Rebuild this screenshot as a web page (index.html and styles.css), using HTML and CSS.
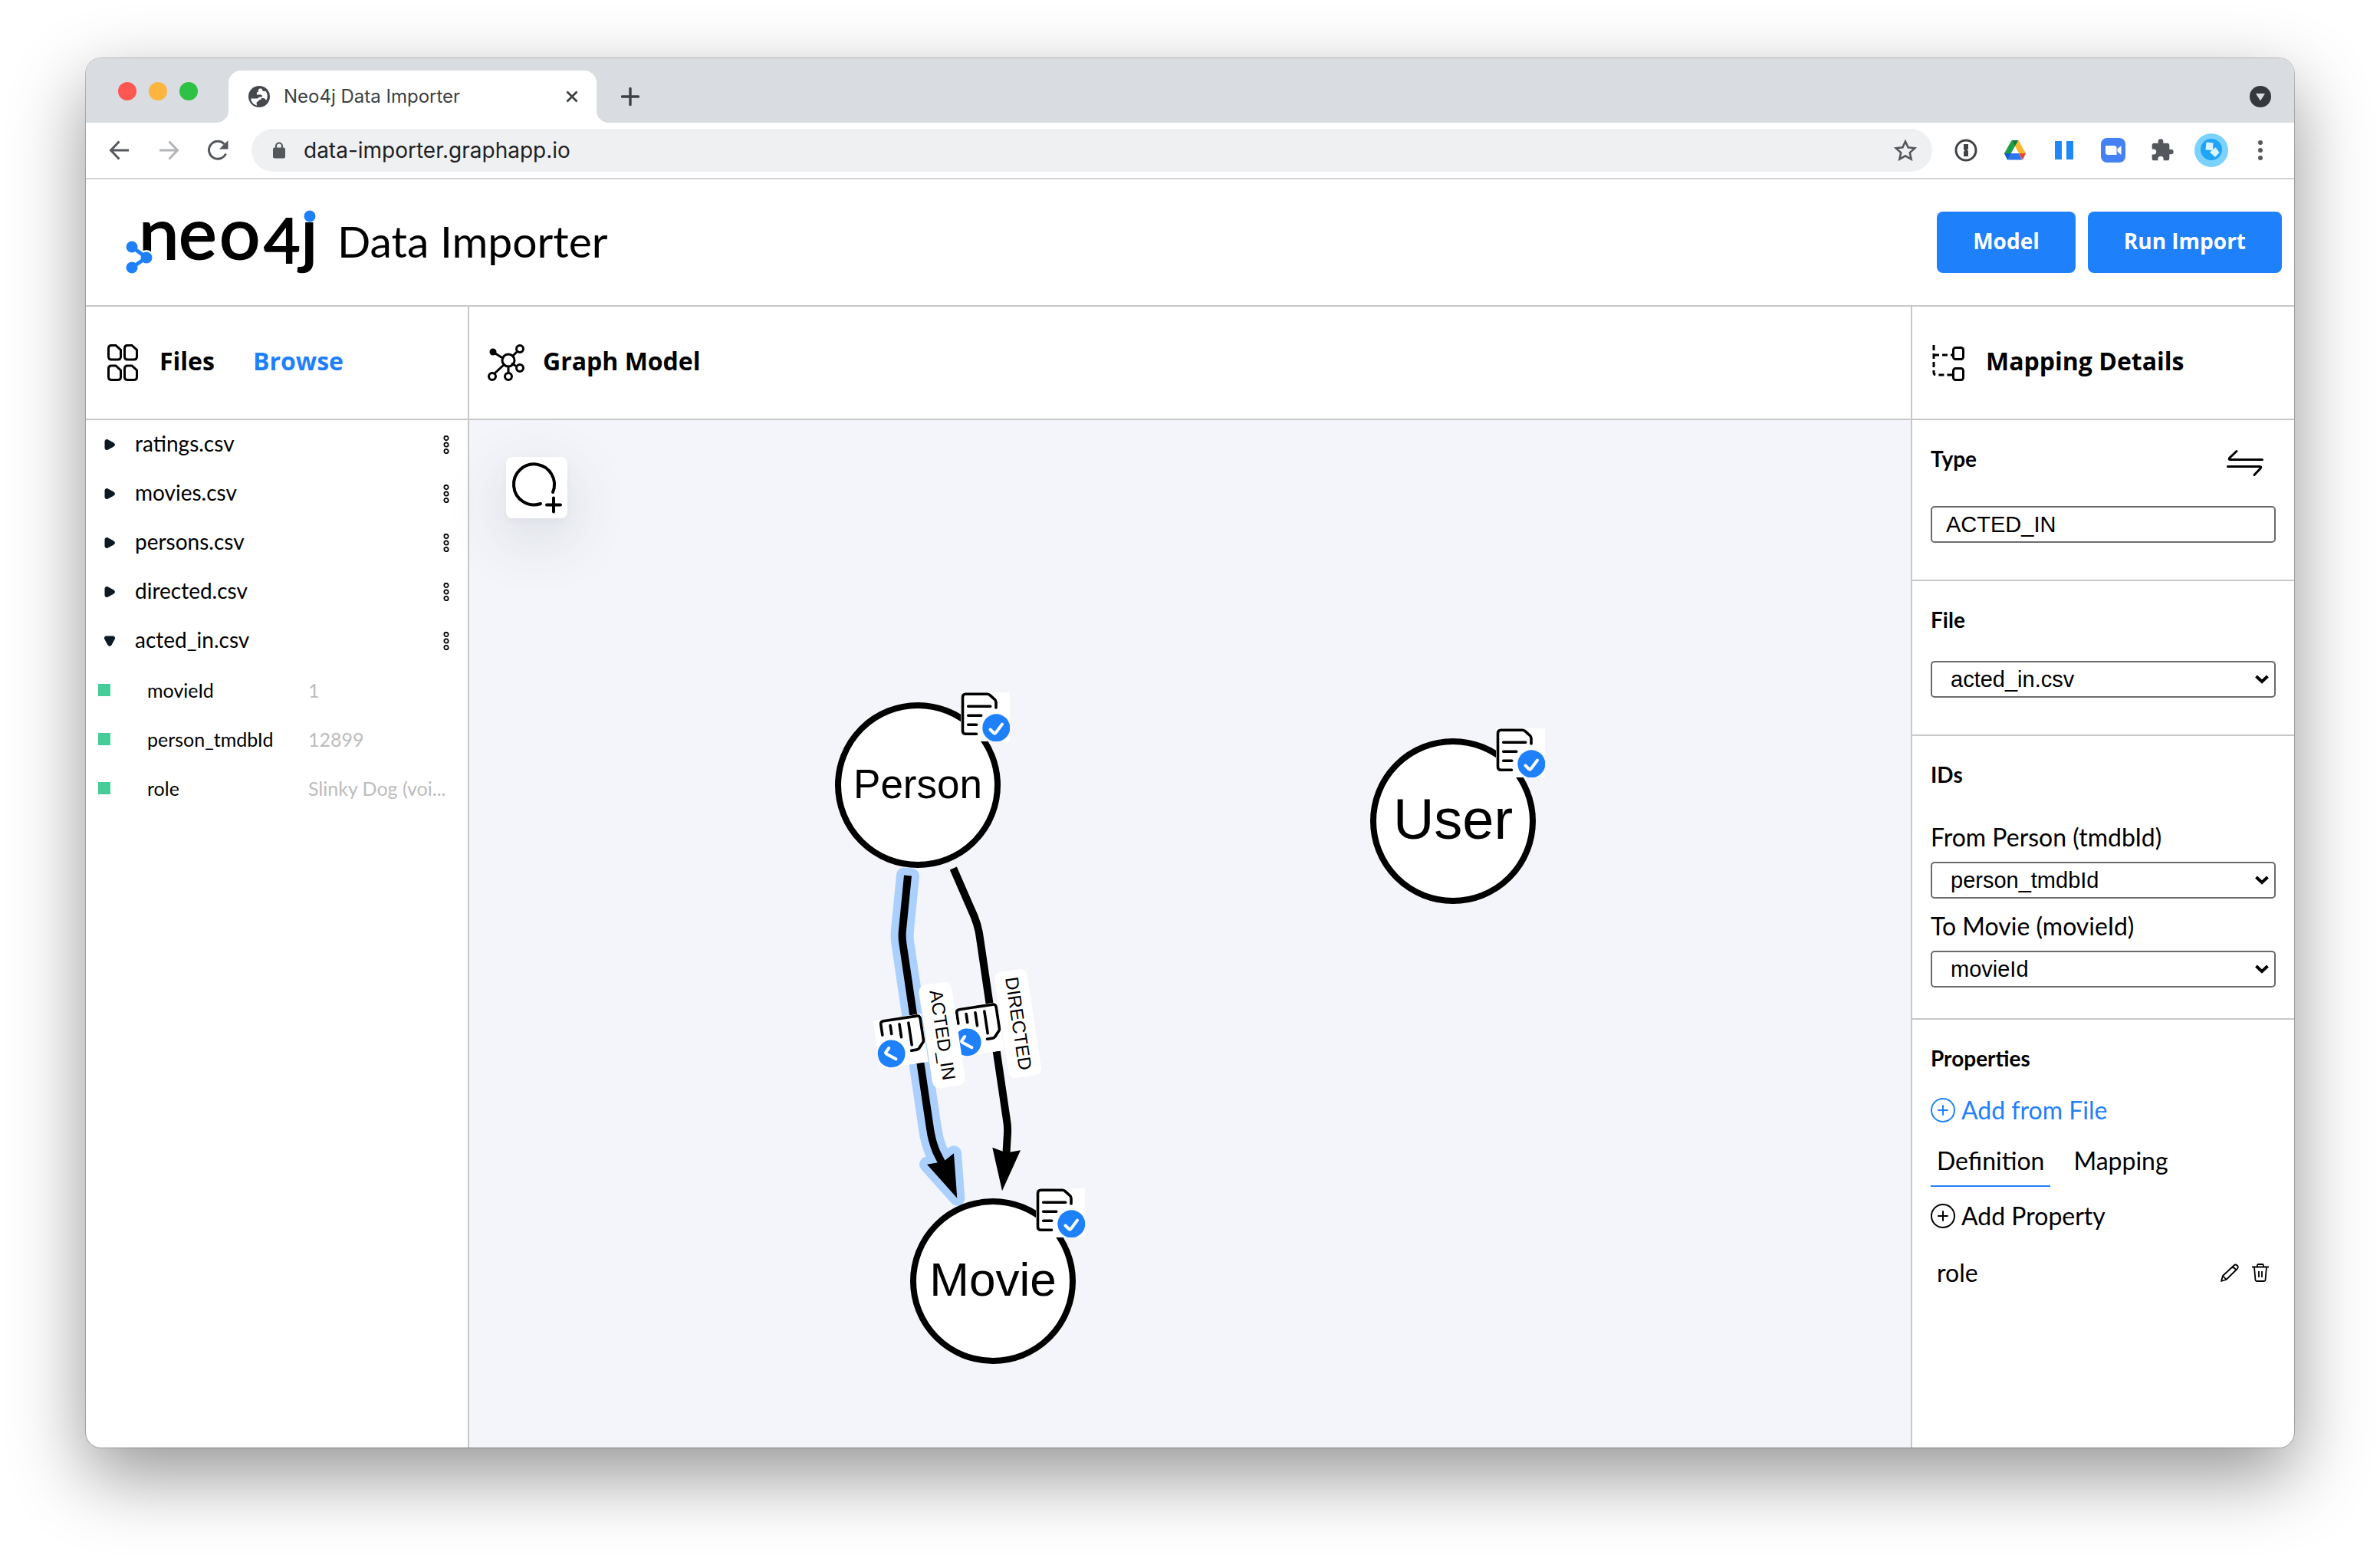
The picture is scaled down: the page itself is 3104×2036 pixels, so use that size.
FILE: index.html
```html
<!DOCTYPE html>
<html lang="en">
<head>
<meta charset="utf-8">
<title>Neo4j Data Importer</title>
<link rel="stylesheet" href="styles.css">
</head>
<body>
<svg class="defs" aria-hidden="true">
  <symbol id="kebab" viewBox="0 0 8 24"><g fill="none" stroke="#000" stroke-width="1.700"><circle cx="4" cy="3.500" r="2.700"/><circle cx="4" cy="12" r="2.700"/><circle cx="4" cy="20.500" r="2.700"/></g></symbol>
  <symbol id="caret" viewBox="0 0 14 14"><path d="M1 2.500v9q0 2 2 2h1l8.500-4.500q2-2 0-4L4 .5H3q-2 0-2 2z" fill="#0c1a25" stroke="#0c1a25"/></symbol>
  <symbol id="plus-circle" viewBox="0 0 32 32"><g fill="none" stroke="currentColor" stroke-width="2" stroke-linecap="round"><circle cx="16" cy="16" r="15"/><path d="M16 10v12M10 16h12"/></g></symbol>
  <symbol id="mapped" viewBox="0 0 64 64">
    <path d="M0 0h64v64H0z" fill="#fff"/>
    <path d="M20.500 54.300H6.500Q2.500 54.300 2.500 50.300V6.300Q2.500 2.300 6.500 2.300H34.500Q36.500 2.300 38 3.600L44.500 9.500Q46 11 46 13V20M9.700 18.300h29M9.700 30.300h17M9.700 42.300h11" fill="none" stroke="#000" stroke-width="3.600" stroke-linecap="round"/>
    <circle cx="46.300" cy="46.300" r="18" fill="#1f80fb"/>
    <path d="M38.500 48.500l4.500 4.500q1.500 1.200 2.800-.4l8.200-11" fill="none" stroke="#fff" stroke-width="4" stroke-linecap="round"/>
  </symbol>
</svg>

<div class="window">
  <div class="tabstrip">
    <div class="lights"><i class="light red"></i><i class="light amber"></i><i class="light green"></i></div>
    <div class="tab">
      <svg width="28" height="28" viewBox="0 0 28 28"><circle cx="14" cy="14" r="14" fill="#45494e"/><path d="M16 3.500c-3 0-3.500 2-3 4-2 .5-2.500 2-2 4h5c1.500 0 2 1 2 3h-3c-2 0-2 2-3.500 2H3.200c.4 4.500 3.500 8 7.800 9 0-2-1-3 0-4.500 1-1 3-1 3-3 1.500 0 3 0 3-2h2.500c2 0 2.500 2 4 2.500 2-4 1.500-9-1.500-12-1 1-3.500.5-4-1s-.5-2-2-2z" fill="#fff"/></svg>
      <span class="tab-title">Neo4j Data Importer</span>
      <button class="bare" aria-label="Close tab"><svg width="16" height="16" viewBox="0 0 16 16"><path d="M1.500 1.500l13 13M14.500 1.500l-13 13" stroke="#3c4043" stroke-width="2.800"/></svg></button>
    </div>
    <button class="bare new-tab" aria-label="New tab"><svg width="24" height="24" viewBox="0 0 24 24"><path d="M12 1.500v21M1.500 12h21" stroke="#3c4043" stroke-width="3.400" stroke-linecap="round"/></svg></button>
    <button class="bare tab-search" aria-label="Search tabs"><svg width="28" height="28" viewBox="0 0 28 28"><circle cx="14" cy="14" r="14" fill="#35393d"/><path d="M8 10h12l-6 9.500z" fill="#dadce0"/></svg></button>
  </div>

  <div class="toolbar">
    <div class="nav">
      <button class="bare" aria-label="Back"><svg width="28" height="28" viewBox="0 0 28 28"><path d="M26 14H3M13.500 2.500L2.500 14l11 11.500" fill="none" stroke="#54575c" stroke-width="3"/></svg></button>
      <button class="bare" aria-label="Forward"><svg width="28" height="28" viewBox="0 0 28 28"><path d="M2 14h23M14.500 2.500l11 11.500-11 11.500" fill="none" stroke="#b3b5b8" stroke-width="3"/></svg></button>
      <button class="bare" aria-label="Reload"><svg width="28" height="28" viewBox="0 0 28 28"><path d="M24.500 18.500A11.500 11.500 0 1 1 22.500 6" fill="none" stroke="#54575c" stroke-width="3"/><path d="M27.500 1v11.500H16z" fill="#54575c"/></svg></button>
    </div>
    <div class="omnibox">
      <svg width="16" height="22" viewBox="0 0 16 22"><rect y="7.500" width="16" height="14" rx="2" fill="#54575c"/><path d="M4 9V5.500a4 4 0 0 1 8 0V9" fill="none" stroke="#54575c" stroke-width="2.200"/></svg>
      <input class="url" type="text" aria-label="Address" value="data-importer.graphapp.io">
      <button class="bare" aria-label="Bookmark"><svg width="30" height="28" viewBox="0 0 30 28"><path d="M15 2.500l3.600 7.900 8.600.9-6.400 5.800 1.800 8.500L15 21.300l-7.600 4.300 1.800-8.500-6.400-5.800 8.600-.9z" fill="none" stroke="#54575c" stroke-width="2.600"/></svg></button>
    </div>
    <div class="extensions">
      <button class="bare" aria-label="Password manager"><svg width="30" height="30" viewBox="0 0 30 30"><circle cx="15" cy="15" r="13" fill="#fff" stroke="#404346" stroke-width="3"/><path d="M12 7h6v6l-1.500 1.500L18 16v7h-6v-6l1.500-1.500L12 14z" fill="#404346"/></svg></button>
      <button class="bare" aria-label="Drive"><svg width="30" height="28" viewBox="0 0 30 28"><path d="M10.500 1L1 18l4 8.500L15 9z" fill="#1c9f47"/><path d="M10.500 1h9L15 9z" fill="#0b7a33"/><path d="M19.500 1L29 18h-9L15 9z" fill="#fdb52c"/><path d="M10 18h10l4.500 8.500H5.500z" fill="#2b76f0"/><path d="M1 18h9l-4.500 8.500z" fill="#1b5bd0"/><path d="M20 18h9l-4 8.500z" fill="#ea4130"/><path d="M15 9l5 9H10z" fill="#fff"/></svg></button>
      <button class="bare" aria-label="Boards"><svg width="24" height="24" viewBox="0 0 24 24"><path d="M0 0h9v24H0zM15 0h9v24h-9z" fill="#1f87f8"/></svg></button>
      <button class="bare" aria-label="Meetings"><svg width="32" height="32" viewBox="0 0 32 32"><rect width="32" height="32" rx="8" fill="#4480f6"/><path d="M6 10h11q3.500 0 3.500 3v9H9.500Q6 22 6 19zM21.500 14l5-4v12l-5-4z" fill="#fff"/></svg></button>
      <button class="bare" aria-label="Extensions"><svg width="32" height="32" viewBox="0 0 24 24"><path d="M20.500 11H19V7c0-1.100-.9-2-2-2h-4V3.500a2.500 2.500 0 0 0-5 0V5H4c-1.100 0-2 .9-2 2v3.800h1.500a2.700 2.700 0 0 1 0 5.400H2V20c0 1.100.9 2 2 2h3.800v-1.500a2.700 2.700 0 0 1 5.400 0V22H17c1.100 0 2-.9 2-2v-4h1.500a2.500 2.500 0 0 0 0-5z" fill="#54575c"/></svg></button>
      <button class="bare" aria-label="Profile"><svg width="44" height="44" viewBox="0 0 44 44"><circle cx="22" cy="22" r="22" fill="#7bd2fc"/><circle cx="22" cy="21" r="14" fill="#1fa4f8"/><path d="M15.500 11.500l9 1-.5 9.500-9.500-.5zM27.500 18l5 7-5.500 6-7-6.500z" fill="#d9f5ff"/></svg></button>
      <button class="bare" aria-label="Browser menu"><svg width="8" height="28" viewBox="0 0 8 28"><g fill="#54575c"><circle cx="4" cy="4" r="3"/><circle cx="4" cy="14" r="3"/><circle cx="4" cy="24" r="3"/></g></svg></button>
    </div>
  </div>

  <header class="app-header">
    <svg class="logo" width="248" height="88" viewBox="0 0 248 88" role="img" aria-label="neo4j">
      <g class="logo-text">
        <text x="17 69 122" y="66">neo</text><text class="logo-four" x="180" y="71">4</text><text x="228" y="66">j</text>
      </g>
      <circle cx="240" cy="2" r="13" fill="#fff"/><circle cx="240" cy="10" r="7.500" fill="#1f80fb"/>
      <circle cx="27" cy="64" r="10" fill="#fff"/>
      <g fill="#1f80fb"><path d="M8 50l19 14L8 77" fill="none" stroke="#1f80fb" stroke-width="5"/><circle cx="8" cy="50" r="7.500"/><circle cx="27" cy="64" r="7.500"/><circle cx="8" cy="77" r="7.500"/></g>
    </svg>
    <h1 class="app-title">Data Importer</h1>
    <button class="primary">Model</button>
    <button class="primary">Run Import</button>
  </header>

  <div class="workspace">
    <section class="panel files">
      <div class="panel-head">
        <svg width="40" height="48" viewBox="0 0 40 48"><g fill="none" stroke="#000" stroke-width="3"><path id="f" d="M5 1.500h6l6.500 6V16q0 4-4 4h-8q-4 0-4-4V5.500q0-4 3.500-4z"/><use href="#f" x="21"/><use href="#f" y="26.500"/><use href="#f" x="21" y="26.500"/></g></svg>
        <h2>Files</h2><a class="browse" href="#">Browse</a>
      </div>
      <ul class="file-list">
        <li><svg class="caret"><use href="#caret"/></svg><span>ratings.csv</span><button class="bare" aria-label="ratings.csv menu"><svg class="kebab"><use href="#kebab"/></svg></button></li>
        <li><svg class="caret"><use href="#caret"/></svg><span>movies.csv</span><button class="bare" aria-label="movies.csv menu"><svg class="kebab"><use href="#kebab"/></svg></button></li>
        <li><svg class="caret"><use href="#caret"/></svg><span>persons.csv</span><button class="bare" aria-label="persons.csv menu"><svg class="kebab"><use href="#kebab"/></svg></button></li>
        <li><svg class="caret"><use href="#caret"/></svg><span>directed.csv</span><button class="bare" aria-label="directed.csv menu"><svg class="kebab"><use href="#kebab"/></svg></button></li>
        <li><svg class="caret open"><use href="#caret"/></svg><span>acted_in.csv</span><button class="bare" aria-label="acted_in.csv menu"><svg class="kebab"><use href="#kebab"/></svg></button></li>
      </ul>
      <dl class="columns">
        <div><dt>movieId</dt><dd>1</dd></div>
        <div><dt>person_tmdbId</dt><dd>12899</dd></div>
        <div><dt>role</dt><dd>Slinky Dog (voi...</dd></div>
      </dl>
    </section>

    <section class="model">
      <div class="panel-head">
        <svg width="48" height="48" viewBox="0 0 48 48"><g fill="none" stroke="#000" stroke-width="3"><path d="M7 10l14 9M39 9l-7 7M31 25l7 4M27 29v9M22 26L8 39"/><circle cx="27" cy="21" r="8"/><circle cx="42" cy="6" r="4.500"/><circle cx="42" cy="31" r="4.500"/><circle cx="27" cy="42" r="4.500"/><circle cx="6" cy="42" r="4.500"/></g><circle cx="7" cy="10" r="4.500"/></svg>
        <h2>Graph Model</h2>
      </div>
      <div class="canvas">
        <button class="add-node" aria-label="Add node"><svg width="80" height="80" viewBox="0 0 80 80"><path d="M45 61A26.500 26.500 0 1 1 61 46M62 53.500v18M53 62.500h18" fill="none" stroke="#000" stroke-width="4" stroke-linecap="round"/></svg></button>
        <svg class="graph">
          <g transform="translate(-612 -548)">
            <g fill="#abd0fe" stroke="#abd0fe" stroke-linejoin="round">
              <path d="M1184 1142L1177 1213Q1176 1222 1177.500 1231L1213 1472Q1215 1487 1221 1502L1229 1516" fill="none" stroke-width="30"/>
              <path d="M1179 1141.500l10 1" stroke-width="20" stroke-linecap="round"/>
              <path d="M1209 1518.700L1230.500 1515 1244 1504.300 1248.300 1562.700z" stroke-width="20"/>
            </g>
            <path d="M1184 1142L1177 1213Q1176 1222 1177.500 1231L1213 1472Q1215 1487 1221 1502L1229 1518" class="edge"/>
            <path d="M1209 1518.700L1230.500 1515 1244 1504.300 1248.300 1562.700z"/>
            <path d="M1243.300 1132.500L1270.500 1195Q1275 1206 1277 1217L1313 1461Q1314.500 1470 1314 1478L1312.500 1504" class="edge"/>
            <path d="M1294.300 1496.700L1312.700 1503.500 1331 1500.300 1307 1553.300z"/>
            <g transform="translate(1300.500 1306.700) rotate(81.430)"><use href="#mapped" width="64" height="64"/></g>
            <g transform="translate(1328 1335) rotate(81.430)"><rect x="-70" y="-21" width="140" height="43" rx="9" fill="#fff"/><text class="edge-label" y="8">DIRECTED</text></g>
            <g transform="translate(1201.500 1321.700) rotate(81.430)"><use href="#mapped" width="64" height="64"/></g>
            <g transform="translate(1229 1350) rotate(81.430)"><rect x="-68" y="-21" width="136" height="43" rx="9" fill="#fff"/><text class="edge-label" y="8">ACTED_IN</text></g>
            <g class="node"><circle cx="1197" cy="1024" r="104"/><text class="t-person" x="1197" y="1041">Person</text><use href="#mapped" x="1253" y="903" width="64" height="64"/></g>
            <g class="node"><circle cx="1895" cy="1071" r="104"/><text class="t-user" x="1895" y="1094">User</text><use href="#mapped" x="1951" y="950" width="64" height="64"/></g>
            <g class="node"><circle cx="1295" cy="1671" r="104"/><text class="t-movie" x="1295" y="1690">Movie</text><use href="#mapped" x="1351" y="1550" width="64" height="64"/></g>
          </g>
        </svg>
      </div>
    </section>

    <section class="panel details">
      <div class="panel-head">
        <svg width="44" height="48" viewBox="0 0 44 48"><path d="M4 1v36q0 3 4 3h21M4 14h25" fill="none" stroke="#000" stroke-width="3" stroke-dasharray="7 4"/><g fill="#fff" stroke="#000" stroke-width="3"><rect x="29.500" y="4.500" width="13" height="15" rx="3"/><rect x="29.500" y="31.500" width="13" height="15" rx="3"/></g></svg>
        <h2>Mapping Details</h2>
      </div>
      <div class="block type-block">
        <div class="label-row"><label class="title" for="type">Type</label>
          <button class="bare" aria-label="Reverse direction"><svg width="48" height="36" viewBox="0 0 48 36"><path d="M46.500 13.500H5q-3 0-1-2.500l9-8.500M1.500 22.500H43q3 0 1 2.500l-8 8.500" fill="none" stroke="#000" stroke-width="3" stroke-linecap="round"/></svg></button></div>
        <input class="field" id="type" type="text" value="ACTED_IN">
      </div>
      <div class="block file-block">
        <label class="title" for="file">File</label>
        <select class="field" id="file"><option>acted_in.csv</option></select>
      </div>
      <div class="block ids-block">
        <h3 class="title">IDs</h3>
        <label for="from">From Person (tmdbId)</label>
        <select class="field" id="from"><option>person_tmdbId</option></select>
        <label for="to">To Movie (movieId)</label>
        <select class="field" id="to"><option>movieId</option></select>
      </div>
      <div class="block props-block">
        <h3 class="title">Properties</h3>
        <button class="bare add link"><svg width="32" height="32"><use href="#plus-circle"/></svg>Add from File</button>
        <div class="tabs"><button class="bare active">Definition</button><button class="bare">Mapping</button></div>
        <button class="bare add"><svg width="32" height="32"><use href="#plus-circle"/></svg>Add Property</button>
        <div class="prop"><span>role</span>
          <button class="bare" aria-label="Edit role"><svg width="24" height="24" viewBox="0 0 24 24"><path d="M1 23l2-7L17.500 2.500q2-2 4.200 0t0 4.500L7.500 21zM3 16l4.500 5M15 5q4 0 5 4" fill="none" stroke="#000" stroke-width="1.800" stroke-linejoin="round"/></svg></button>
          <button class="bare" aria-label="Delete role"><svg width="24" height="24" viewBox="0 0 24 24"><path d="M1 4.500h22M4 4.500l1.500 17q.2 1.500 1.700 1.500h9.600q1.500 0 1.700-1.500l1.500-17M8 4.500V2.500Q8 1 9.500 1h5Q16 1 16 2.500v2M10 10v8M14 10v8" fill="none" stroke="#000" stroke-width="1.800"/></svg></button>
        </div>
      </div>
    </section>
  </div>
</div>
</body>
</html>
```

FILE: styles.css
```css
* { box-sizing: border-box; margin: 0; padding: 0; }

body {
  min-height: 100vh;
  display: flex;
  padding: 76px 112px 148px;
  background: #fff;
  color: #000;
  font: 28px/40px Lato, "Open Sans", sans-serif;
}

svg { display: block; flex: none; }
.defs { position: absolute; width: 0; height: 0; }
.bare { background: none; border: 0; font: inherit; color: inherit; display: block; }
h1, h2, h3 { font-weight: 400; font-size: inherit; }
ul { list-style: none; }

.window {
  flex: 1;
  display: flex;
  flex-direction: column;
  min-width: 0;
  border-radius: 20px;
  background: #fff;
  overflow: hidden;
  box-shadow: 0 0 0 1px rgba(0, 0, 0, .22), 0 36px 96px rgba(0, 0, 0, .42);
}

/* Browser chrome */
.tabstrip {
  display: flex;
  align-items: flex-start;
  height: 84px;
  padding: 0 30px 0 42px;
  background: #d9dce1;
  font: 24px/32px Inter, sans-serif;
  color: #3c4043;
}
.lights { display: flex; gap: 16px; padding-top: 31px; }
.light { width: 24px; height: 24px; border-radius: 50%; }
.red { background: #fc5753; }
.amber { background: #fcb63f; }
.green { background: #2dc146; }
.tab {
  display: flex;
  align-items: center;
  gap: 18px;
  width: 480px;
  height: 68px;
  margin: 16px 0 0 40px;
  padding: 0 24px 0 26px;
  background: #fff;
  border-radius: 16px 16px 0 0;
  position: relative;
}
.tab::before, .tab::after {
  content: "";
  position: absolute;
  bottom: 0;
  width: 16px;
  height: 16px;
}
.tab::before { left: -16px; background: radial-gradient(circle at 0 0, transparent 16px, #fff 16px); }
.tab::after { right: -16px; background: radial-gradient(circle at 100% 0, transparent 16px, #fff 16px); }
.tab-title { flex: 1; }
.new-tab { margin: 38px 0 0 32px; }
.tab-search { margin: 36px 0 0 auto; }

.toolbar {
  display: flex;
  align-items: center;
  gap: 12px;
  height: 74px;
  padding: 0 12px 0 30px;
  border-bottom: 2px solid #d3d4d6;
}
.nav { display: flex; gap: 36px; margin-right: 18px; }
.omnibox {
  flex: 1;
  display: flex;
  align-items: center;
  height: 56px;
  padding: 0 20px 0 28px;
  gap: 24px;
  border-radius: 28px;
  background: #eff0f2;
}
.url {
  flex: 1;
  min-width: 0;
  border: 0;
  background: none;
  color: #202124;
  font: 28px/40px Inter, sans-serif;
}
.extensions { display: flex; align-items: center; }
.extensions .bare { width: 64px; display: flex; justify-content: center; }

/* Application header */
.app-header {
  display: flex;
  align-items: center;
  gap: 16px;
  height: 166px;
  padding: 0 16px 0 52px;
  border-bottom: 2px solid #c8c8c8;
}
.logo { overflow: visible; }
.logo-text { font: 94px Lato, sans-serif; stroke: #000; stroke-width: 2px; }
.logo-four { font-size: 82px; }
.app-title { flex: 1; margin-left: 12px; padding-bottom: 4px; font-size: 57px; line-height: 72px; }
.primary {
  height: 80px;
  padding: 0 47px 4px;
  border: 0;
  border-radius: 8px;
  background: #1f80fb;
  color: #fff;
  font: 700 28px/40px "Open Sans", sans-serif;
}
.primary:first-of-type { margin-right: 0; }

/* Three panels */
.workspace { flex: 1; display: grid; grid-template-columns: 500px 1fr 500px; }
.files { border-right: 2px solid #c8c8c8; }
.details { border-left: 2px solid #c8c8c8; }
.panel-head {
  display: flex;
  align-items: center;
  height: 148px;
  padding: 0 24px;
  gap: 28px;
  border-bottom: 2px solid #c8c8c8;
  font: 700 32px/40px "Open Sans", sans-serif;
}
.panel-head h2 { font-weight: 700; padding-bottom: 4px; }
.files .panel-head { padding-left: 28px; }
.model .panel-head { gap: 24px; }
.browse { margin-left: 22px; padding-bottom: 4px; color: #1f80fb; text-decoration: none; }

.file-list li {
  display: flex;
  align-items: center;
  gap: 26px;
  height: 64px;
  padding: 0 24px;
}
.file-list span { flex: 1; padding-bottom: 4px; }
.caret { width: 14px; height: 14px; }
.open { transform: rotate(90deg); }
.kebab { width: 8px; height: 24px; }

.columns { font-size: 25px; }
.columns div {
  display: grid;
  grid-template-columns: 16px 162px 1fr;
  column-gap: 48px;
  align-items: center;
  height: 64px;
  padding-left: 16px;
}
.columns div::before { content: ""; height: 16px; background: #44cd98; }
.columns dd { color: #bcbcbc; }

/* Graph canvas */
.model { display: flex; flex-direction: column; min-width: 0; }
.canvas { flex: 1; position: relative; background: #f4f5fa; }
.add-node {
  position: absolute;
  top: 48px;
  left: 48px;
  border: 0;
  border-radius: 8px;
  background: #fff;
  box-shadow: 0 24px 80px rgba(40, 60, 70, .16), 0 4px 8px rgba(40, 60, 70, .04);
}
.graph { position: absolute; inset: 0; width: 100%; height: 100%; pointer-events: none; font-family: "Liberation Sans", Arial, sans-serif; }
.graph text { text-anchor: middle; }
.edge { fill: none; stroke: #000; stroke-width: 10; }
.edge-label { font-size: 24px; }
.node circle { fill: #fff; stroke: #000; stroke-width: 8; }
.t-person { font-size: 53px; }
.t-movie { font-size: 62px; }
.t-user { font-size: 74px; }

/* Mapping details */
.block {
  display: flex;
  flex-direction: column;
  padding: 30px 24px 48px;
  border-bottom: 2px solid #c8c8c8;
}
.title { font-size: 28px; font-weight: 700; }
.label-row { display: flex; justify-content: space-between; align-items: center; padding-right: 16px; }
.type-block { gap: 42px; }
.label-row .bare { margin-bottom: -12px; }
.file-block { gap: 34px; }
.field {
  width: 100%;
  height: 48px;
  border: 2px solid #6b6b6b;
  border-radius: 5px;
  background: #fff;
  color: #000;
  font: 29px/40px "Liberation Sans", Arial, sans-serif;
  padding: 0 18px;
  appearance: none;
}
select.field {
  padding: 0 24px;
  background: #fff url("data:image/svg+xml,%3Csvg xmlns='http://www.w3.org/2000/svg' width='18' height='12'%3E%3Cpath d='M1.500 2L9 9l7.500-7' fill='none' stroke='%23000' stroke-width='4'/%3E%3C/svg%3E") no-repeat right 7px center;
}
.ids-block, .props-block { font-size: 32px; }
.ids-block { padding-bottom: 40px; }
.ids-block .title { margin-bottom: 42px; }
.ids-block .field { margin-top: 12px; }
.ids-block .field + label { margin-top: 16px; }
.props-block { border: 0; }
.add { display: flex; align-items: center; gap: 8px; }
.link { color: #1f80fb; margin-top: 28px; }
.tabs { display: flex; gap: 22px; margin: 26px 0 18px; }
.tabs .bare { padding: 0 8px 12px; border-bottom: 2px solid transparent; }
.tabs .active { border-color: #1f80fb; }
.prop { display: flex; align-items: center; gap: 16px; margin-top: 34px; padding: 0 8px; }
.prop span { flex: 1; }
```
